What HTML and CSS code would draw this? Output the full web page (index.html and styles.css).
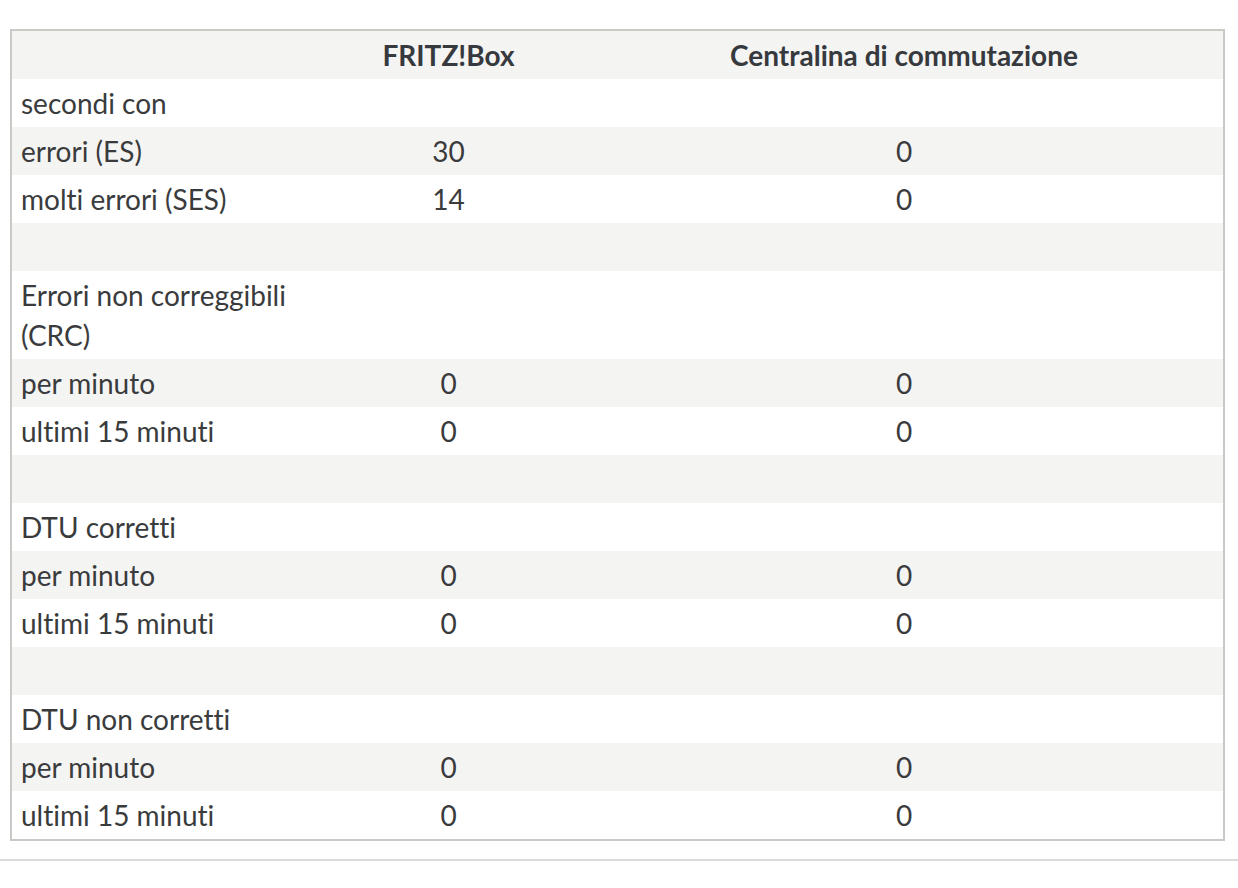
FILE: index.html
```html
<!DOCTYPE html>
<html lang="it">
<head>
<meta charset="utf-8">
<title>Statistica errori</title>
<link rel="stylesheet" href="styles.css">
</head>
<body>
<div class="page">
  <table class="stats">
    <colgroup>
      <col class="c-label">
      <col class="c-box">
      <col class="c-ex">
    </colgroup>
    <thead>
      <tr class="alt"><th></th><th>FRITZ!Box</th><th>Centralina di commutazione</th></tr>
    </thead>
    <tbody>
      <tr><td class="label">secondi con</td><td></td><td></td></tr>
      <tr class="alt"><td class="label">errori (ES)</td><td>30</td><td>0</td></tr>
      <tr><td class="label">molti errori (SES)</td><td>14</td><td>0</td></tr>
      <tr class="alt"><td class="label">&nbsp;</td><td></td><td></td></tr>
      <tr><td class="label">Errori non correggibili (CRC)</td><td></td><td></td></tr>
      <tr class="alt"><td class="label">per minuto</td><td>0</td><td>0</td></tr>
      <tr><td class="label">ultimi 15 minuti</td><td>0</td><td>0</td></tr>
      <tr class="alt"><td class="label">&nbsp;</td><td></td><td></td></tr>
      <tr><td class="label">DTU corretti</td><td></td><td></td></tr>
      <tr class="alt"><td class="label">per minuto</td><td>0</td><td>0</td></tr>
      <tr><td class="label">ultimi 15 minuti</td><td>0</td><td>0</td></tr>
      <tr class="alt"><td class="label">&nbsp;</td><td></td><td></td></tr>
      <tr><td class="label">DTU non corretti</td><td></td><td></td></tr>
      <tr class="alt"><td class="label">per minuto</td><td>0</td><td>0</td></tr>
      <tr><td class="label">ultimi 15 minuti</td><td>0</td><td>0</td></tr>
    </tbody>
  </table>
</div>
<hr class="rule">
</body>
</html>
```
FILE: styles.css
```css
html, body {
  margin: 0;
  padding: 0;
  background: #ffffff;
}
body {
  font-family: Lato, "Open Sans", sans-serif;
  font-variant-ligatures: none;
  color: #3a3b3d;
  font-size: 28px;
}
.page {
  padding: 29px 13px 0 10px;
}
.stats {
  width: 1215px;
  border-collapse: collapse;
  border: 2px solid #c9c9c6;
  table-layout: fixed;
}
.c-label { width: 301px; }
.c-box { width: 274px; }
.c-ex { width: auto; }
.stats th,
.stats td {
  padding: 4px 10px 4px 9px;
  line-height: 40px;
  text-align: center;
  vertical-align: middle;
  font-weight: normal;
}
.stats th {
  font-weight: bold;
  color: #36393d;
}
.stats td.label {
  text-align: left;
}
.stats tr.alt {
  background: #f4f4f2;
}
.rule {
  margin: 18px 0 0 0;
  border: 0;
  border-top: 2px solid #dadada;
  height: 0;
}
```
